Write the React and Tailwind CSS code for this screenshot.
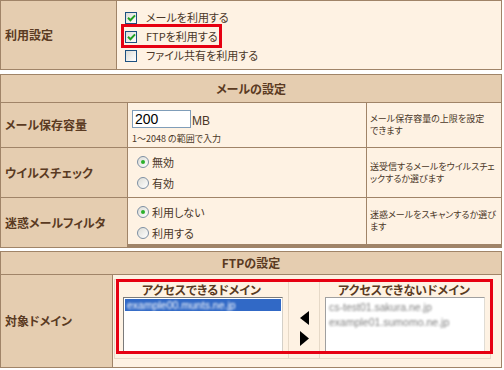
import React from "react";

function Check({ checked }) {
  return (
    <span className="w-[12px] h-[12px] border border-[#1d5180] bg-gradient-to-br from-[#dcdcd6] to-white flex items-center justify-center shrink-0">
      {checked && (
        <svg width="9" height="8" viewBox="0 0 9 8">
          <path d="M1 3.8 L3.4 6.2 L8 1.4" fill="none" stroke="#21a121" strokeWidth="2" />
        </svg>
      )}
    </span>
  );
}

function Radio({ checked }) {
  return (
    <span className="w-[12px] h-[12px] rounded-full border border-[#7d8fa3] bg-gradient-to-br from-[#dcdcd6] to-white flex items-center justify-center shrink-0">
      {checked && <span className="w-[4px] h-[4px] rounded-full bg-[#2bb02b]" />}
    </span>
  );
}

const LABEL =
  "bg-[#e5cdb0] flex items-center pl-[4px] font-bold text-[12px] text-[#5a3a22]";
const CELL = "bg-[#fef2e3]";
const NOTE =
  "bg-[#fef2e3] flex flex-col justify-center pl-[3px] text-[9px] leading-[12px] whitespace-nowrap overflow-hidden";

export default function App() {
  return (
    <div className="w-[504px] h-[370px] bg-white overflow-hidden font-['Noto_Sans_CJK_JP',sans-serif] [font-feature-settings:'palt'] text-[#4a3728] leading-none">
      {/* Table 1 */}
      <div className="w-[502px] h-[70px] border border-[#a08468] grid grid-cols-[116px_1fr]">
        <div className={`${LABEL} border-r border-[#a08468]`}>利用設定</div>
        <div className={`${CELL} relative flex flex-col pt-[7px] pl-[8px] text-[11px]`}>
          <div className="h-[19px] flex items-center gap-[9px]">
            <Check checked />
            <span>メールを利用する</span>
          </div>
          <div className="h-[19px] flex items-center gap-[9px]">
            <Check checked />
            <span>FTPを利用する</span>
          </div>
          <div className="h-[19px] flex items-center gap-[9px]">
            <Check />
            <span>ファイル共有を利用する</span>
          </div>
          <div className="absolute left-[4px] top-[23px] w-[101px] h-[24px] border-[3px] border-[#e60012]" />
        </div>
      </div>

      {/* Table 2 */}
      <div className="mt-[4px] w-[502px] border-l border-r border-t border-[#a08468] grid grid-cols-[127px_239px_134px]">
        <div className="col-span-3 h-[28px] bg-[#e5cdb0] border-b border-[#a08468] flex items-center justify-center font-bold text-[12px] text-[#5a3a22]">
          メールの設定
        </div>

        <div className={`${LABEL} h-[45px] border-r border-b border-[#a08468]`}>メール保存容量</div>
        <div className={`${CELL} border-r border-b border-[#a08468] pl-[4px] pt-[7px]`}>
          <div className="flex items-end gap-[1px]">
            <div className="w-[59px] h-[18px] bg-white border border-[#7f9db9] flex items-center pl-[2px] font-['Liberation_Sans',sans-serif] text-[14px] text-black">
              200
            </div>
            <span className="font-['Liberation_Sans',sans-serif] text-[12px] pb-[1px]">MB</span>
          </div>
          <div className="mt-[6px] text-[9px]">1〜2048 の範囲で入力</div>
        </div>
        <div className={`${NOTE} border-b border-[#a08468]`}>
          <div>メール保存容量の上限を設定</div>
          <div>できます</div>
        </div>

        <div className={`${LABEL} h-[50px] border-r border-b border-[#a08468]`}>ウイルスチェック</div>
        <div className={`${CELL} border-r border-b border-[#a08468] pl-[9px] pt-[8px] text-[11px] flex flex-col gap-[9px]`}>
          <div className="flex items-center gap-[3px]">
            <Radio checked />
            <span>無効</span>
          </div>
          <div className="flex items-center gap-[3px]">
            <Radio />
            <span>有効</span>
          </div>
        </div>
        <div className={`${NOTE} border-b border-[#a08468]`}>
          <div>送受信するメールをウイルスチェ</div>
          <div>ックするか選びます</div>
        </div>

        <div className={`${LABEL} h-[50px] border-r border-b border-[#a08468]`}>迷惑メールフィルタ</div>
        <div className={`${CELL} border-r border-b-4 border-[#a08468] pl-[9px] pt-[8px] text-[11px] flex flex-col gap-[9px]`}>
          <div className="flex items-center gap-[3px]">
            <Radio checked />
            <span>利用しない</span>
          </div>
          <div className="flex items-center gap-[3px]">
            <Radio />
            <span>利用する</span>
          </div>
        </div>
        <div className={`${NOTE} border-b-4 border-[#a08468]`}>
          <div>迷惑メールをスキャンするか選び</div>
          <div>ます</div>
        </div>
      </div>

      {/* Table 3 */}
      <div className="mt-[3px] w-[502px] border border-[#a08468] grid grid-cols-[112px_1fr]">
        <div className="col-span-2 h-[23px] bg-[#e5cdb0] border-b border-[#a08468] flex items-center justify-center font-bold text-[12px] text-[#5a3a22]">
          FTPの設定
        </div>
        <div className={`${LABEL} h-[92px] border-r border-[#a08468]`}>対象ドメイン</div>
        <div className={`${CELL} relative pl-[1px] pt-[4px]`}>
          <div className="w-[377px] h-[80px] border border-[#e6d9c8] grid grid-cols-[174px_31px_168px]">
            <div className="border-r border-[#e6d9c8] flex flex-col items-center">
              <div className="h-[17px] pt-[4px] font-bold text-[12px] text-[#5a3a22]">アクセスできるドメイン</div>
              <div className="self-start ml-[8px] w-[160px] h-[55px] bg-white border border-[#7a7a7a] border-r-[#d4d0c8] border-b-[#d4d0c8] p-[1px]">
                <div className="h-[12px] bg-[#3169c6] flex items-center pl-[2px]">
                  <span className="text-white text-[10.5px] font-['Liberation_Sans',sans-serif] blur-[1px]">example00.munts.ne.jp</span>
                </div>
              </div>
            </div>
            <div className="border-r border-[#e6d9c8] flex flex-col items-center pt-[31px] gap-[6px]">
              <svg width="9" height="14" viewBox="0 0 9 14">
                <path d="M9 0 L0 7 L9 14 Z" fill="#000" />
              </svg>
              <svg width="9" height="15" viewBox="0 0 9 15">
                <path d="M0 0 L9 7.5 L0 15 Z" fill="#000" />
              </svg>
            </div>
            <div className="flex flex-col items-center">
              <div className="h-[17px] pt-[4px] font-bold text-[12px] text-[#5a3a22]">アクセスできないドメイン</div>
              <div className="self-start ml-[5px] w-[160px] h-[55px] bg-white border border-[#a0a0a0] border-r-[#e0dcd4] border-b-[#e0dcd4] pt-[4px] pl-[3px] flex flex-col gap-[4px]">
                <span className="text-[#808080] text-[10.5px] font-['Liberation_Sans',sans-serif] blur-[1px]">cs-test01.sakura.ne.jp</span>
                <span className="text-[#808080] text-[10.5px] font-['Liberation_Sans',sans-serif] blur-[1px]">example01.sumomo.ne.jp</span>
              </div>
            </div>
          </div>
          <div className="absolute left-[3px] top-[4px] w-[377px] h-[75px] border-[3px] border-[#e60012]" />
        </div>
      </div>
    </div>
  );
}
